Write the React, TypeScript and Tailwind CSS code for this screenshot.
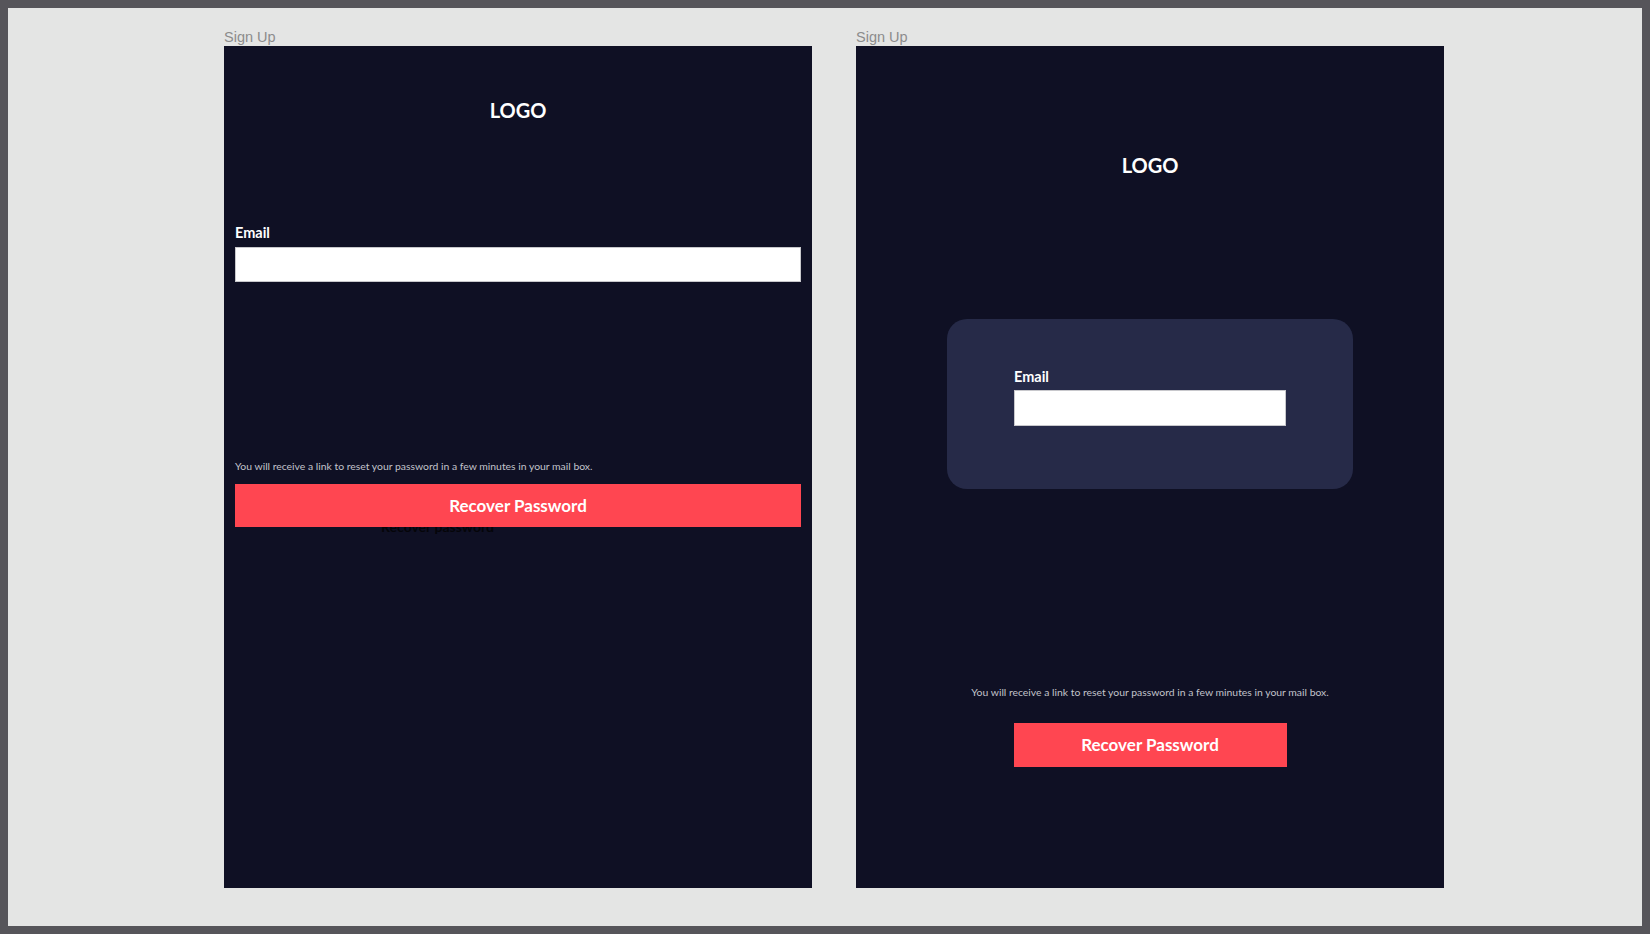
export default function App() {
  return (
    <div className="h-screen w-full overflow-hidden border-8 border-[#56555a] bg-[#e4e5e4]">
      <div className="flex gap-[44px] pl-[216px] pt-[20px]">
        <div className="flex flex-col">
          <div className="h-[18px] text-[14.5px] leading-[18px] text-[#8c8c8c] [font-family:'Liberation_Sans',Arial,sans-serif]">Sign Up</div>
          <div className="flex h-[842px] w-[588px] flex-col bg-[#0f1024] px-[11px] [font-family:Lato,sans-serif]">
            <div className="mt-[50px] text-center text-[20px] font-bold leading-[28px] text-white">LOGO</div>
            <label className="mt-[100px] text-[14.5px] font-bold leading-[18px] text-white">Email</label>
            <input className="mt-[5px] h-[35px] w-full border border-[#c8c8cc] bg-white" />
            <p className="mt-[176px] text-[10.4px] leading-[16px] text-[#c2c3cb]">
              You will receive a link to reset your password in a few minutes in your mail box.
            </p>
            <div className="relative mt-[10px]">
              <span className="absolute left-[146px] top-[33px] text-[14px] font-bold leading-[20px] text-[#050509]">Recover password</span>
              <button className="relative z-10 h-[43px] w-full bg-[#ff4651] text-[17px] font-bold text-white">Recover Password</button>
            </div>
          </div>
        </div>

        <div className="flex flex-col">
          <div className="h-[18px] text-[14.5px] leading-[18px] text-[#8c8c8c] [font-family:'Liberation_Sans',Arial,sans-serif]">Sign Up</div>
          <div className="flex h-[842px] w-[588px] flex-col items-center bg-[#0f1024] [font-family:Lato,sans-serif]">
            <div className="mt-[105px] text-center text-[20px] font-bold leading-[28px] text-white">LOGO</div>
            <div className="mt-[140px] flex h-[170px] w-[406px] flex-col rounded-[20px] bg-[#262a48] px-[67px] pt-[49px]">
              <label className="text-[14.5px] font-bold leading-[18px] text-white">Email</label>
              <input className="mt-[4px] h-[36px] w-full border border-[#c8c8cc] bg-white" />
            </div>
            <p className="mt-[195px] text-center text-[10.4px] leading-[16px] text-[#c2c3cb]">
              You will receive a link to reset your password in a few minutes in your mail box.
            </p>
            <button className="mt-[23px] h-[44px] w-[273px] bg-[#ff4651] text-[17px] font-bold text-white">Recover Password</button>
          </div>
        </div>
      </div>
    </div>
  );
}
